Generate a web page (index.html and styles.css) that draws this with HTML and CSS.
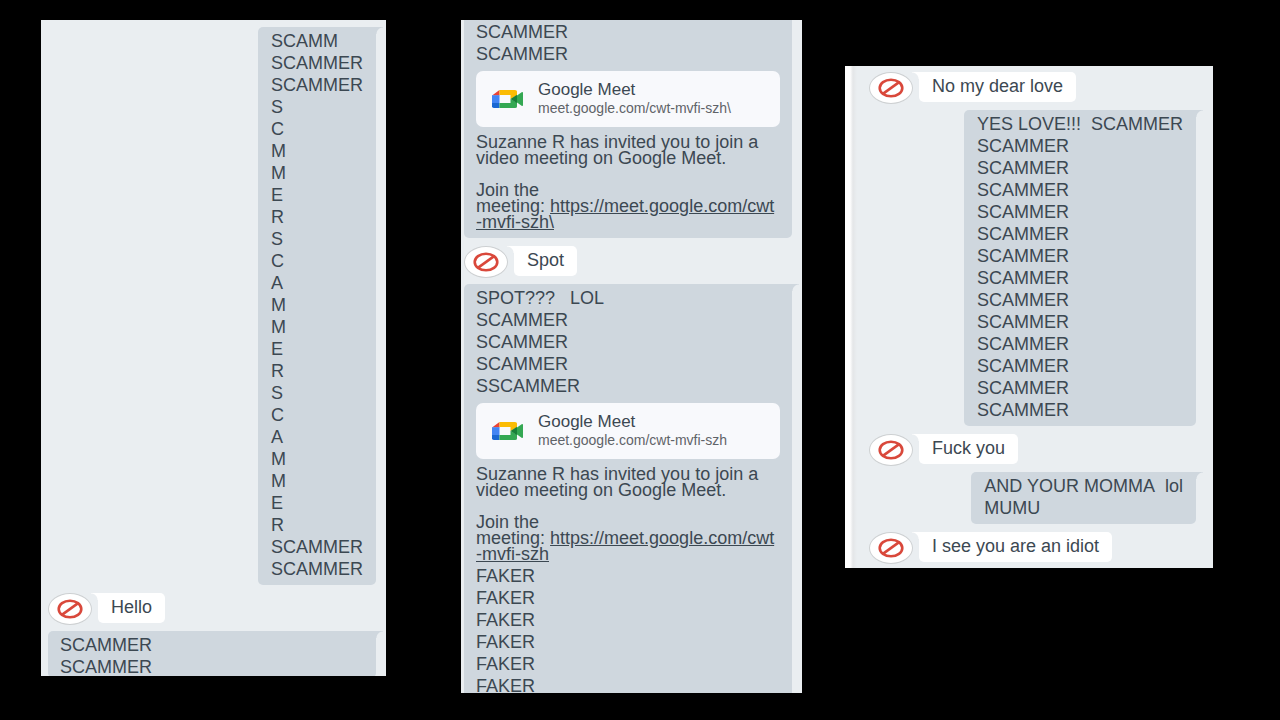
FILE: index.html
```html
<!DOCTYPE html>
<html lang="en">
<head>
<meta charset="utf-8">
<title>Chat</title>
<link rel="stylesheet" href="styles.css">
</head>
<body>
<svg class="defs" aria-hidden="true">
  <symbol id="blocked" viewBox="0 0 42 30">
    <ellipse cx="21" cy="15" rx="11.3" ry="8.3" fill="none" stroke="#d9483b" stroke-width="2.6"/>
    <path d="M13.2 20.6 28.8 9.4" stroke="#d9483b" stroke-width="2.6"/>
  </symbol>
  <symbol id="meet" viewBox="0 0 31 18">
    <path d="M0 5.5 7.5 0V5.5Z" fill="#ea4335"/>
    <path d="M0 5.2H7.5V13H0Z" fill="#4285f4"/>
    <path d="M0 13H7.5V18H1.8Q0 18 0 16.6Z" fill="#1967d2"/>
    <path d="M7.5 0H23Q25 0 25 1.5V5.2L18.5 9V5H7.5Z" fill="#fbbc04"/>
    <path d="M7.5 13H18.5V9L25 12.8V16.5Q25 18 23 18H7.5Z" fill="#34a853"/>
    <path d="M18.5 9 25 4.7V13.3Z" fill="#188038"/>
    <path d="M25 5.5 29.6 2.3Q31 1.7 31 3V15Q31 16.3 29.6 15.7L25 12.5Z" fill="#34a853"/>
  </symbol>
</svg>
<main class="board">
  <section class="panel panel-first">
    <div class="sent">
      <p>SCAMM</p><p>SCAMMER</p><p>SCAMMER</p>
      <p>S</p><p>C</p><p>M</p><p>M</p><p>E</p><p>R</p>
      <p>S</p><p>C</p><p>A</p><p>M</p><p>M</p><p>E</p><p>R</p>
      <p>S</p><p>C</p><p>A</p><p>M</p><p>M</p><p>E</p><p>R</p>
      <p>SCAMMER</p><p>SCAMMER</p>
    </div>
    <div class="received">
      <span class="avatar"><svg><use href="#blocked"/></svg></span>
      <p class="reply">Hello</p>
    </div>
    <div class="sent wide cut-bottom">
      <p>SCAMMER</p><p>SCAMMER</p>
    </div>
  </section>

  <section class="panel panel-second">
    <div class="sent wide cut-top">
      <p>SCAMMER</p><p>SCAMMER</p>
      <div class="card">
        <svg class="card-icon"><use href="#meet"/></svg>
        <div><div class="card-title">Google Meet</div><div class="card-url">meet.google.com/cwt-mvfi-szh\</div></div>
      </div>
      <div class="invite">Suzanne R has invited you to join a<br>video meeting on Google Meet.<br><br>Join the<br>meeting: <a href="#">https://meet.google.com/cwt<br>-mvfi-szh\</a></div>
    </div>
    <div class="received">
      <span class="avatar"><svg><use href="#blocked"/></svg></span>
      <p class="reply">Spot</p>
    </div>
    <div class="sent wide cut-bottom">
      <p>SPOT??? &nbsp; LOL</p><p>SCAMMER</p><p>SCAMMER</p><p>SCAMMER</p><p>SSCAMMER</p>
      <div class="card">
        <svg class="card-icon"><use href="#meet"/></svg>
        <div><div class="card-title">Google Meet</div><div class="card-url">meet.google.com/cwt-mvfi-szh</div></div>
      </div>
      <div class="invite">Suzanne R has invited you to join a<br>video meeting on Google Meet.<br><br>Join the<br>meeting: <a href="#">https://meet.google.com/cwt<br>-mvfi-szh</a></div>
      <p>FAKER</p><p>FAKER</p><p>FAKER</p><p>FAKER</p><p>FAKER</p><p>FAKER</p>
    </div>
  </section>

  <section class="panel panel-third">
    <div class="received">
      <span class="avatar"><svg><use href="#blocked"/></svg></span>
      <p class="reply">No my dear love</p>
    </div>
    <div class="sent">
      <p>YES LOVE!!!&nbsp; SCAMMER</p>
      <p>SCAMMER</p><p>SCAMMER</p><p>SCAMMER</p><p>SCAMMER</p><p>SCAMMER</p><p>SCAMMER</p><p>SCAMMER</p>
      <p>SCAMMER</p><p>SCAMMER</p><p>SCAMMER</p><p>SCAMMER</p><p>SCAMMER</p><p>SCAMMER</p>
    </div>
    <div class="received">
      <span class="avatar"><svg><use href="#blocked"/></svg></span>
      <p class="reply">Fuck you</p>
    </div>
    <div class="sent">
      <p>AND YOUR MOMMA&nbsp; lol</p><p>MUMU</p>
    </div>
    <div class="received">
      <span class="avatar"><svg><use href="#blocked"/></svg></span>
      <p class="reply">I see you are an idiot</p>
    </div>
  </section>
</main>
</body>
</html>
```

FILE: styles.css
```css
* { box-sizing: border-box; }

body {
  margin: 0;
  background: #000;
  color: #3c4852;
  font-family: "Liberation Sans", Arial, sans-serif;
  font-size: 18px;
  line-height: 22px;
}

p { margin: 0; }

.defs { display: none; }

.board {
  display: grid;
  grid-template-columns: 41fr 345fr 75fr 341fr 43fr 368fr 67fr;
  align-items: start;
  padding: 20px 0;
}

.panel {
  display: flex;
  flex-direction: column;
  gap: 8px;
  overflow: hidden;
  background: #eaeef1;
  white-space: nowrap;
}

.panel-first { grid-column: 2; padding: 7px 10px 0 7px; }
.panel-second { grid-column: 4; padding: 0 10px 0 3px; }
.panel-third {
  grid-column: 6;
  margin-top: 46px;
  padding: 6px 17px 6px 24px;
  background: linear-gradient(90deg, #fff 5px, #e4e6e8 8px, #eaeef1 12px);
}

.sent {
  position: relative;
  align-self: flex-end;
  padding: 3px 13px 5px;
  border-radius: 5px 0 5px 5px;
  background: #cfd7de;
}

.sent::after {
  content: "";
  position: absolute;
  top: 0;
  left: 100%;
  width: 7px;
  height: 7px;
  background: radial-gradient(circle at 100% 100%, transparent 6px, #cfd7de 7px);
}

.wide { align-self: stretch; padding: 3px 12px 5px; }
.cut-top { padding-top: 1px; border-top-left-radius: 0; }
.cut-top::after { display: none; }
.panel-first .cut-bottom { margin-bottom: -2px; padding-bottom: 0; }
.panel-second .cut-bottom { margin-bottom: -4px; padding-bottom: 0; }

.received {
  display: flex;
  align-items: flex-start;
  gap: 6px;
  height: 30px;
}

.avatar {
  display: block;
  flex: none;
  width: 44px;
  height: 32px;
  border: 1px solid #cdd0d2;
  border-radius: 50%;
  background: #fff;
}

.avatar svg { display: block; width: 100%; height: 100%; }

.reply {
  position: relative;
  padding: 3px 13px 5px;
  border-radius: 0 5px 5px 5px;
  background: #fff;
}

.reply::before {
  content: "";
  position: absolute;
  top: 0;
  right: 100%;
  width: 7px;
  height: 7px;
  background: radial-gradient(circle at 0 100%, transparent 6px, #fff 7px);
}

.card {
  display: flex;
  align-items: center;
  gap: 15px;
  height: 56px;
  margin-top: 6px;
  padding: 0 16px;
  border-radius: 7px;
  background: #f8f9fc;
}

.card-icon { flex: none; width: 31px; height: 18px; }
.card-title { font-size: 17px; line-height: 18px; }
.card-url { font-size: 14px; line-height: 18px; color: #5f6368; }

.invite { margin: 7px 0 3px; line-height: 16px; }
.invite a { color: inherit; }
```
